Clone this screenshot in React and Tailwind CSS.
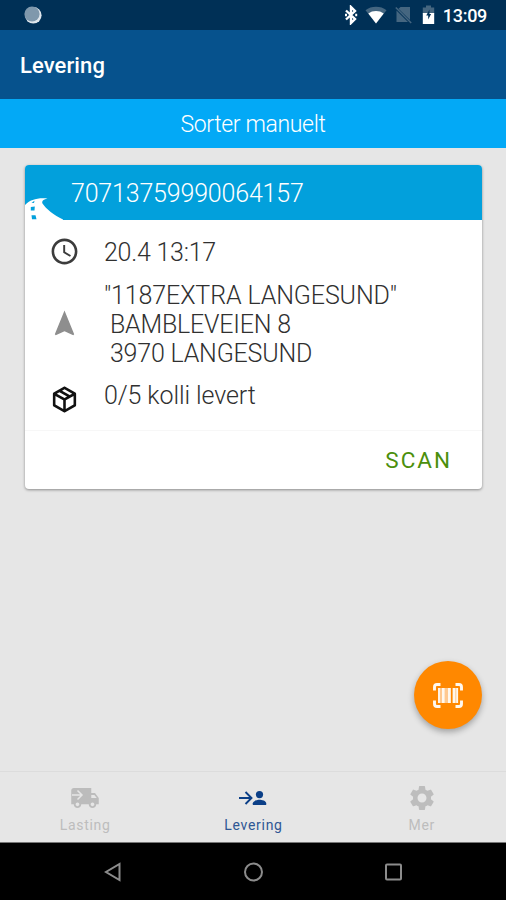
import {
  MdAccessTime,
  MdLocalShipping,
  MdNavigation,
  MdSettings,
} from "react-icons/md";

const roboto = "font-['Roboto',sans-serif]";

function StatusBar() {
  return (
    <div className="flex h-[30px] items-center bg-[#003056] pl-[24px] pr-[19px] text-white">
      <svg width="18" height="18" viewBox="0 0 18 18">
        <circle cx="9.3" cy="9.3" r="8.3" fill="#dfe6ec" />
        <circle cx="8" cy="8" r="7.6" fill="#7f98ac" />
      </svg>
      <div className="ml-auto flex items-center">
        <svg width="14" height="20" viewBox="0 0 14 20" className="mr-[7px]" fill="none" stroke="#fff" strokeWidth="2.4">
          <path d="M2 5.500 11 14 7 18V2l4 4-9 8.500" />
          <path d="M1 10h2M11.200 10h2" />
        </svg>
        <svg width="22" height="18" viewBox="0 0 22 18" className="mr-[8px]">
          <path d="M11 17.500 0.500 4.200C3.500 1.900 7 .8 11 .8s7.500 1.100 10.500 3.400z" fill="#456680" />
          <path d="M11 17.500 3.300 7.600C5.600 5.900 8.200 5.100 11 5.100s5.400.8 7.700 2.500z" fill="#fff" />
        </svg>
        <svg width="17" height="18" viewBox="0 0 17 18" className="mr-[10px]">
          <path d="M5.500 1H15V14L3.500 2.800z M1.500 4.500 13 16H1.500z" fill="#456680" />
          <path d="M.8 1.500 16.200 17" stroke="#456680" strokeWidth="1.500" />
        </svg>
        <svg width="13" height="20" viewBox="0 0 13 20" className="mr-[8px]">
          <path d="M4 0.500h5v2h3.200V9H.8V2.500H4z" fill="#456680" />
          <path d="M.8 8h11.400v11H.8z" fill="#fff" />
          <path d="M7.500 4.500 4.200 10.500h2v4L9.100 9H7.500z" fill="#003056" />
        </svg>
        <span className="mt-[2px] text-[18px] leading-none font-medium tracking-[-0.3px]">13:09</span>
      </div>
    </div>
  );
}

function CardRow({ icon, children, className }) {
  return (
    <div className={`flex items-center ${className}`}>
      <div className="flex w-[79px] shrink-0 justify-center">{icon}</div>
      {children}
    </div>
  );
}

function PackageIcon() {
  return (
    <svg className="mt-[7px] size-[31px]" viewBox="0 0 24 24" fill="#111">
      <path d="M21,16.5C21,16.88 20.79,17.21 20.47,17.38L12.57,21.82C12.41,21.94 12.21,22 12,22C11.79,22 11.59,21.94 11.43,21.82L3.53,17.38C3.21,17.21 3,16.88 3,16.5V7.5C3,7.12 3.21,6.79 3.53,6.62L11.43,2.18C11.59,2.06 11.79,2 12,2C12.21,2 12.41,2.06 12.57,2.18L20.47,6.62C20.79,6.79 21,7.12 21,7.5V16.5M12,4.15L10.11,5.22L16,8.61L17.96,7.5L12,4.15M6.04,7.5L12,10.85L13.96,9.75L8.08,6.35L6.04,7.5M5,15.91L11,19.29V12.58L5,9.21V15.91M19,15.91V9.21L13,12.58V19.29L19,15.91Z" />
    </svg>
  );
}

function DeliveryCard() {
  return (
    <div className="mt-[17px] mr-[24px] ml-[25px] h-[324px] overflow-hidden rounded-[4px] bg-white shadow-[0_1px_3px_rgba(0,0,0,0.4)]">
      <div className="flex h-[55px] items-end bg-[#02a0dc]">
        <svg width="38" height="22" viewBox="0 0 38 22" className="shrink-0">
          <path d="M0 22V7C5 1.500 13-.5 22.500.5 18 1.500 16.500 3 17.500 5.500 21 11 29 17 38 21.500V22z" fill="#fff" />
          <path d="M6.500 4.800 9.500 2.800 9 5zM5.800 9l4-.5-.3 3.900H5.800zM6.500 17.300h4l1 3.900H7z" fill="#02a0dc" />
        </svg>
        <span className="ml-[8px] self-center pt-[2px] text-[25px] leading-none font-light tracking-[-0.18px] text-white">
          70713759990064157
        </span>
      </div>
      <div className="h-[211px] border-b border-[#f7f7f7] pt-[16px] text-[25px] leading-[29px] font-light tracking-[-0.2px] whitespace-pre text-[#303030]">
        <CardRow className="h-[31px]" icon={<MdAccessTime className="size-[31px] text-[#3c3c3c]" />}>
          <span className="pt-[2px] tracking-[-0.25px]">20.4 13:17</span>
        </CardRow>
        <CardRow className="mt-[13px] h-[87px]" icon={<MdNavigation className="size-[31px] text-[#8e8e8e]" />}>
          <div className="pt-[2px]">
            <p className="tracking-[-0.12px]">"1187EXTRA LANGESUND"</p>
            <p> BAMBLEVEIEN 8</p>
            <p> 3970 LANGESUND</p>
          </div>
        </CardRow>
        <CardRow className="mt-[13px] h-[31px]" icon={<PackageIcon />}>
          <span className="-mt-px tracking-[-0.1px]">0/5 kolli levert</span>
        </CardRow>
      </div>
      <div className="flex h-[58px] items-center justify-end pr-[30px]">
        <button className="text-[22.500px] leading-none tracking-[2px] text-[#4b8f0c]">SCAN</button>
      </div>
    </div>
  );
}

function ScanButton() {
  return (
    <button className="mr-[24px] mb-[42px] flex size-[68px] items-center justify-center self-end rounded-full bg-[#ff8800] shadow-[0_3px_6px_rgba(0,0,0,0.3)]">
      <svg width="30" height="25" viewBox="0 0 30 25" fill="none">
        <path d="M1.500 7.500V4q0-2.500 2.500-2.500H7.500M22.500 1.500H26q2.500 0 2.500 2.500V7.500M28.500 17.500V21q0 2.500-2.500 2.500H22.500M7.500 23.500H4q-2.500 0-2.500-2.500V17.500" stroke="#fff8ee" strokeWidth="2.900" />
        <path d="M5 5h13v15H5zM19.800 5h5.200v15h-5.200z" fill="#ffc990" />
        <path d="M6 5v15M24.200 5v15" stroke="#fff8ee" strokeWidth="1.800" />
        <path d="M10.300 5v15M16.300 5v15M21 5v15" stroke="#fff8ee" strokeWidth="2.600" />
      </svg>
    </button>
  );
}

function TruckIcon() {
  return (
    <div className="relative">
      <MdLocalShipping className="size-[30px] text-[#bcbcbc]" />
      <svg className="absolute top-[6px] left-0" width="16" height="12" viewBox="0 0 16 12" fill="none">
        <path d="M2 6H12M7.500 1.500 12 6 7.500 10.500" stroke="#e6e6e6" strokeWidth="1.500" />
      </svg>
    </div>
  );
}

function DeliverIcon() {
  return (
    <svg width="28" height="16" viewBox="0 0 28 16" fill="none">
      <path d="M0 8H12M6.500 2 12.500 8 6.500 14" stroke="#0b3f87" strokeWidth="1.900" />
      <circle cx="20.500" cy="4.600" r="3.600" fill="#0b3f87" />
      <path d="M13.800 15v-1.700c0-2.400 4.500-3.500 6.700-3.500s6.700 1.100 6.700 3.500V15z" fill="#0b3f87" />
    </svg>
  );
}

function Tab({ icon, label, active }) {
  return (
    <button
      className={`flex flex-1 flex-col items-center text-[14px] leading-none tracking-[0.7px] ${
        active ? "text-[#2f5794]" : "text-[#bdbdbd]"
      }`}
    >
      <div className="mt-[11px] mb-[5px] flex h-[30px] items-center">{icon}</div>
      {label}
    </button>
  );
}

export default function App() {
  return (
    <div className={`flex h-[900px] w-[506px] flex-col overflow-hidden bg-[#e6e6e6] ${roboto}`}>
      <StatusBar />
      <header className="flex h-[69px] items-center bg-[#06528d] pl-[20px]">
        <h1 className="pt-[2px] text-[22px] leading-none font-medium tracking-[0.1px] text-white">Levering</h1>
      </header>
      <button className="h-[49px] bg-[#03a9f6] pt-[2px] text-[23px] leading-none font-light tracking-[-0.35px] text-white">
        Sorter manuelt
      </button>
      <main className="flex flex-1 flex-col">
        <DeliveryCard />
        <div className="mt-auto flex flex-col">
          <ScanButton />
        </div>
      </main>
      <nav className="flex h-[71px] border-t border-[#dcdcdc] pl-px">
        <Tab icon={<TruckIcon />} label="Lasting" />
        <Tab icon={<DeliverIcon />} label="Levering" active />
        <Tab icon={<MdSettings className="size-[30px]" />} label="Mer" />
      </nav>
      <div className="flex h-[58px] items-center justify-center gap-[120px] border-t border-[#777] bg-black">
        <svg width="20" height="20" viewBox="0 0 20 20" fill="none" stroke="#8c8c8c" strokeWidth="2">
          <path d="M16.500 2v16L3 10z" />
        </svg>
        <svg width="20" height="20" viewBox="0 0 20 20" fill="none" stroke="#8c8c8c" strokeWidth="2">
          <circle cx="10.500" cy="10" r="8.500" />
        </svg>
        <svg width="20" height="20" viewBox="0 0 20 20" fill="none" stroke="#8c8c8c" strokeWidth="2">
          <rect x="3" y="2.500" width="15" height="15" rx="1" />
        </svg>
      </div>
    </div>
  );
}
